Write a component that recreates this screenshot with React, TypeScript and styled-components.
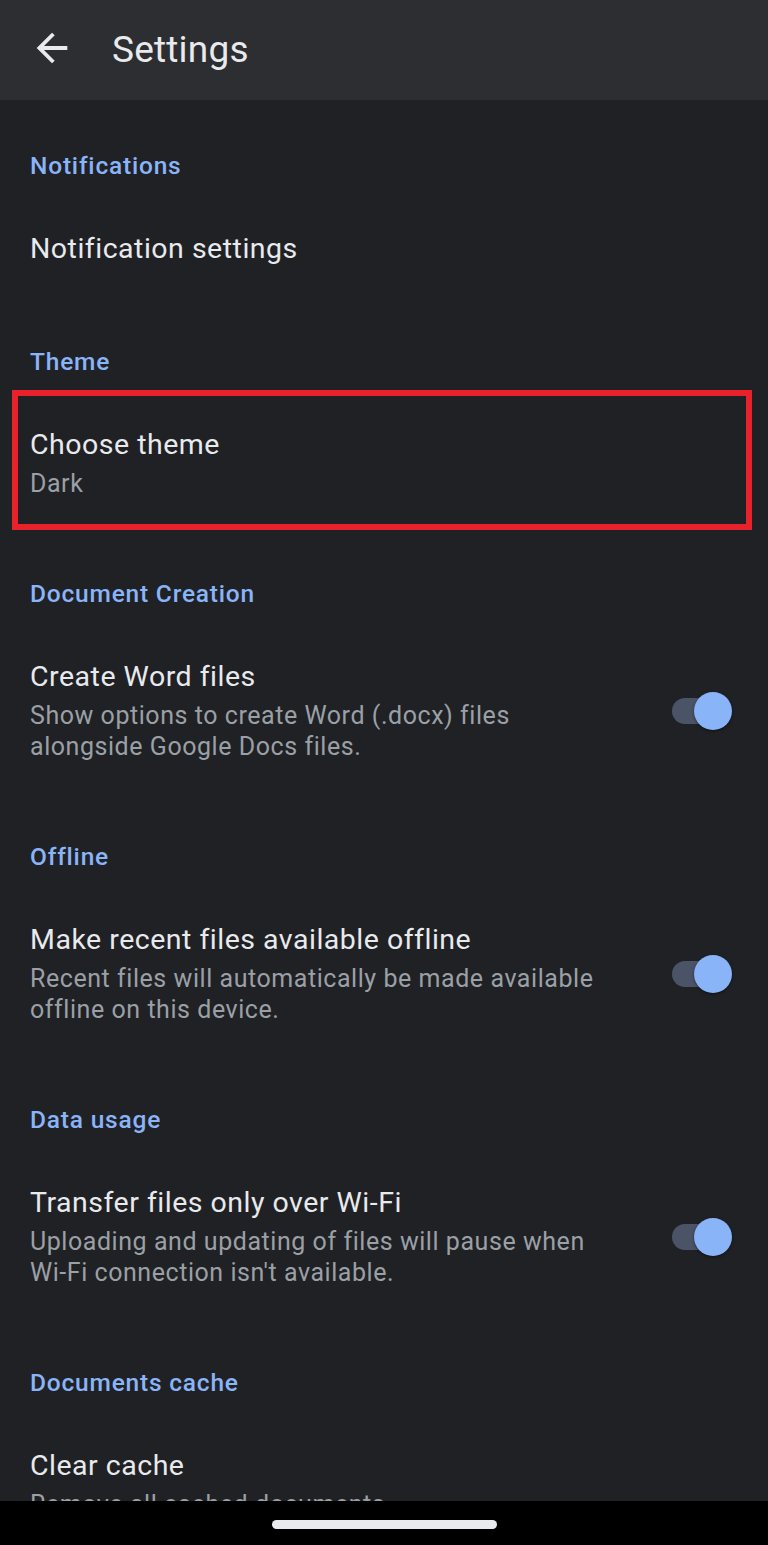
import React from "react";
import styled, { createGlobalStyle } from "styled-components";

const GlobalStyle = createGlobalStyle`
  html, body {
    margin: 0;
    padding: 0;
    background: #202124;
  }
  * {
    box-sizing: border-box;
  }
`;

const Screen = styled.div`
  width: 768px;
  height: 1545px;
  display: flex;
  flex-direction: column;
  background: #202124;
  font-family: Roboto, "Liberation Sans", sans-serif;
  overflow: hidden;
`;

const TopBar = styled.header`
  height: 100px;
  flex-shrink: 0;
  display: flex;
  align-items: center;
  background: #2d2e31;
  padding-left: 29px;
`;

const BackButton = styled.button`
  width: 46px;
  height: 46px;
  padding: 0;
  border: none;
  background: transparent;
  display: flex;
  align-items: center;
  justify-content: center;
  margin-top: -4px;
`;

const Title = styled.h1`
  margin: -2px 0 0 37px;
  font-size: 37px;
  font-weight: 400;
  color: #e8eaed;
  letter-spacing: 0.2px;
`;

const Content = styled.main`
  flex: 1;
  overflow: hidden;
`;

const SectionTitle = styled.div<{ $first?: boolean }>`
  padding: ${(p) => (p.$first ? 50 : 55)}px 30px 25px;
  font-size: 24.5px;
  line-height: 32px;
  font-weight: 500;
  letter-spacing: 0.8px;
  color: #8ab4f8;
`;

const Row = styled.div<{ $highlight?: boolean }>`
  position: relative;
  display: flex;
  align-items: center;
  padding: 24px 36px 24px 30px;

  ${(p) =>
    p.$highlight &&
    `
    &::after {
      content: "";
      position: absolute;
      left: 12px;
      right: 16px;
      top: -13px;
      bottom: -7px;
      border: 6px solid #e8212b;
      pointer-events: none;
    }
  `}
`;

const RowText = styled.div`
  flex: 1;
  min-width: 0;
`;

const RowTitle = styled.div`
  font-size: 28.5px;
  line-height: 36px;
  letter-spacing: 0.5px;
  color: #e8eaed;
`;

const RowSubtitle = styled.div`
  margin-top: 5px;
  font-size: 25px;
  line-height: 31px;
  letter-spacing: 0.55px;
  color: #9aa0a6;
  white-space: pre-line;
`;

const Switch = styled.div`
  position: relative;
  width: 60px;
  height: 38px;
  flex-shrink: 0;
  margin-left: 24px;
`;

const SwitchTrack = styled.div`
  position: absolute;
  left: 0;
  top: 6px;
  width: 56px;
  height: 26px;
  border-radius: 13px;
  background: #4b5467;
`;

const SwitchThumb = styled.div`
  position: absolute;
  right: 0;
  top: 0;
  width: 38px;
  height: 38px;
  border-radius: 50%;
  background: #8ab4f8;
  box-shadow: 0 1px 3px rgba(0, 0, 0, 0.5);
`;

const NavBar = styled.div`
  height: 44px;
  flex-shrink: 0;
  background: #000;
  display: flex;
  justify-content: center;
  padding-top: 19px;
`;

const HomePill = styled.div`
  width: 225px;
  height: 9px;
  border-radius: 5px;
  background: #e8eaed;
`;

type Item = {
  title: string;
  subtitle?: string;
  toggle?: boolean;
  highlight?: boolean;
};

type Section = {
  header: string;
  items: Item[];
};

const sections: Section[] = [
  { header: "Notifications", items: [{ title: "Notification settings" }] },
  {
    header: "Theme",
    items: [{ title: "Choose theme", subtitle: "Dark", highlight: true }],
  },
  {
    header: "Document Creation",
    items: [
      {
        title: "Create Word files",
        subtitle: "Show options to create Word (.docx) files\nalongside Google Docs files.",
        toggle: true,
      },
    ],
  },
  {
    header: "Offline",
    items: [
      {
        title: "Make recent files available offline",
        subtitle: "Recent files will automatically be made available\noffline on this device.",
        toggle: true,
      },
    ],
  },
  {
    header: "Data usage",
    items: [
      {
        title: "Transfer files only over Wi-Fi",
        subtitle: "Uploading and updating of files will pause when\nWi-Fi connection isn't available.",
        toggle: true,
      },
    ],
  },
  {
    header: "Documents cache",
    items: [{ title: "Clear cache", subtitle: "Remove all cached documents" }],
  },
];

function ArrowBack() {
  return (
    <svg width="46" height="46" viewBox="0 0 24 24" fill="#e8eaed">
      <path d="M20 11H7.83l5.59-5.59L12 4l-8 8 8 8 1.41-1.41L7.83 13H20v-2z" />
    </svg>
  );
}

function Toggle() {
  return (
    <Switch>
      <SwitchTrack />
      <SwitchThumb />
    </Switch>
  );
}

export default function App() {
  return (
    <Screen>
      <GlobalStyle />
      <TopBar>
        <BackButton aria-label="Back">
          <ArrowBack />
        </BackButton>
        <Title>Settings</Title>
      </TopBar>
      <Content>
        {sections.map((section, i) => (
          <section key={section.header}>
            <SectionTitle $first={i === 0}>{section.header}</SectionTitle>
            {section.items.map((item) => (
              <Row key={item.title} $highlight={item.highlight}>
                <RowText>
                  <RowTitle>{item.title}</RowTitle>
                  {item.subtitle && <RowSubtitle>{item.subtitle}</RowSubtitle>}
                </RowText>
                {item.toggle && <Toggle />}
              </Row>
            ))}
          </section>
        ))}
      </Content>
      <NavBar>
        <HomePill />
      </NavBar>
    </Screen>
  );
}
